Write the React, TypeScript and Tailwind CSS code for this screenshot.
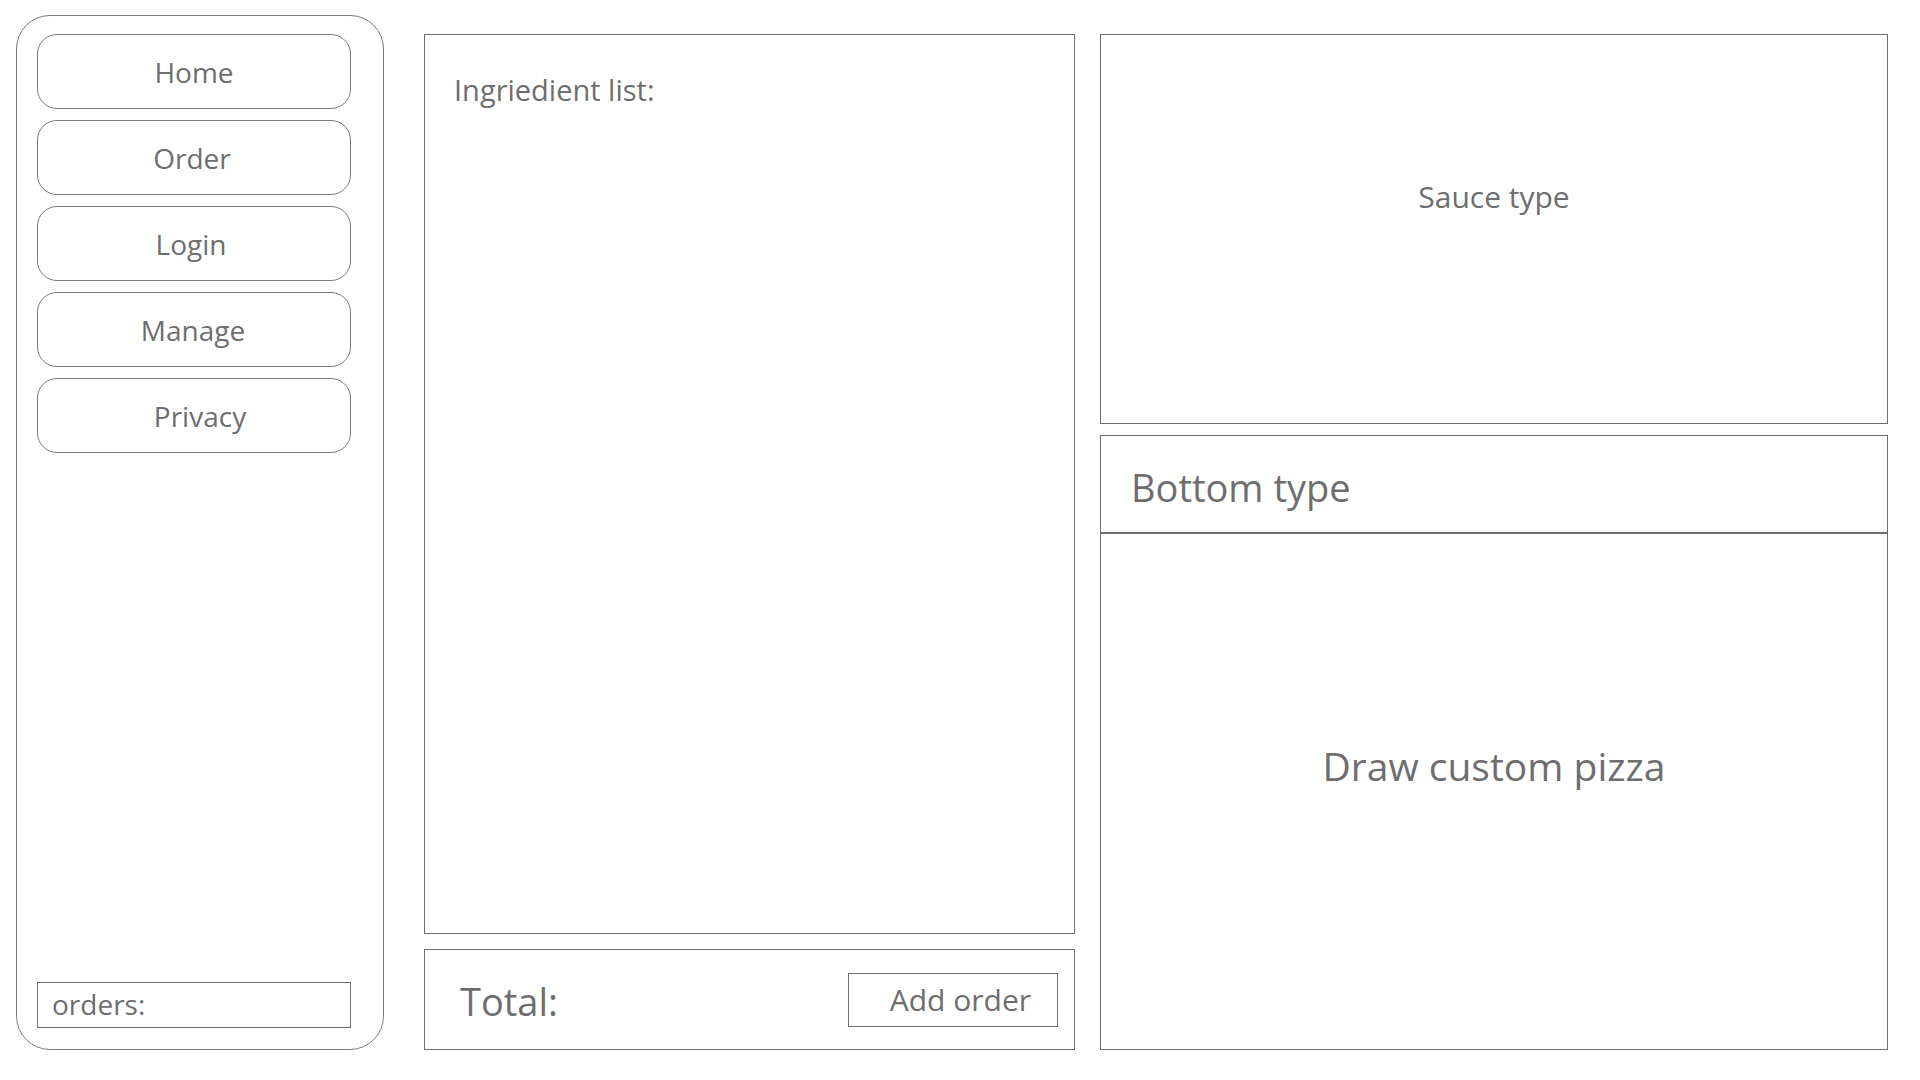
const navItems: { label: string; shift: string }[] = [
  { label: "Home", shift: "pl-0" },
  { label: "Order", shift: "pr-[4px]" },
  { label: "Login", shift: "pr-[6px]" },
  { label: "Manage", shift: "pr-[2px]" },
  { label: "Privacy", shift: "pl-[12px]" },
];

function Sidebar() {
  return (
    <aside className="ml-[16px] mt-[15px] flex h-[1035px] w-[368px] flex-col rounded-[34px] border border-[#7a7a7a] pb-[21px] pl-[20px] pr-[32px] pt-[18px]">
      <nav className="flex flex-col gap-[11px]">
        {navItems.map((item) => (
          <button
            key={item.label}
            className={`flex h-[75px] w-full items-center justify-center rounded-[20px] border border-[#7a7a7a] text-[28px] text-[#6e6e6e] ${item.shift}`}
          >
            {item.label}
          </button>
        ))}
      </nav>
      <div className="mt-auto flex h-[46px] items-center border border-[#6e6e6e] pb-[3px] pl-[14px] text-[28px] leading-none text-[#6e6e6e]">
        orders:
      </div>
    </aside>
  );
}

function OrderColumn() {
  return (
    <section className="ml-[40px] mt-[34px] flex w-[651px] flex-col gap-[15px]">
      <div className="h-[900px] border border-[#6e6e6e] pl-[29px] pt-[35px]">
        <p className="text-[29px] leading-[40px] text-[#6e6e6e]">Ingriedient list:</p>
      </div>
      <div className="flex h-[101px] items-center justify-between border border-[#6e6e6e] pl-[35px] pr-[16px]">
        <span className="pt-[3px] text-[38px] text-[#6e6e6e]">Total:</span>
        <button className="flex h-[54px] w-[210px] items-center justify-end border border-[#6e6e6e] pr-[26px] text-[30px] text-[#6e6e6e]">
          Add order
        </button>
      </div>
    </section>
  );
}

function PizzaColumn() {
  return (
    <section className="ml-[25px] mt-[34px] flex w-[788px] flex-col gap-[11px]">
      <div className="h-[390px] border border-[#6e6e6e] pt-[141px] text-center">
        <p className="text-[30px] leading-[42px] text-[#6e6e6e]">Sauce type</p>
      </div>
      <div className="flex h-[615px] flex-col border border-[#6e6e6e]">
        <div className="flex h-[98px] items-center border-b-2 border-[#6e6e6e] pl-[30px] pt-[6px]">
          <h2 className="text-[38px] text-[#6e6e6e]">Bottom type</h2>
        </div>
        <div className="flex flex-1 items-center justify-center pb-[50px]">
          <p className="text-[39px] text-[#6e6e6e]">Draw custom pizza</p>
        </div>
      </div>
    </section>
  );
}

export default function App() {
  return (
    <div className="flex h-[1080px] w-[1920px] items-start bg-white font-['Open_Sans',sans-serif]">
      <Sidebar />
      <OrderColumn />
      <PizzaColumn />
    </div>
  );
}
